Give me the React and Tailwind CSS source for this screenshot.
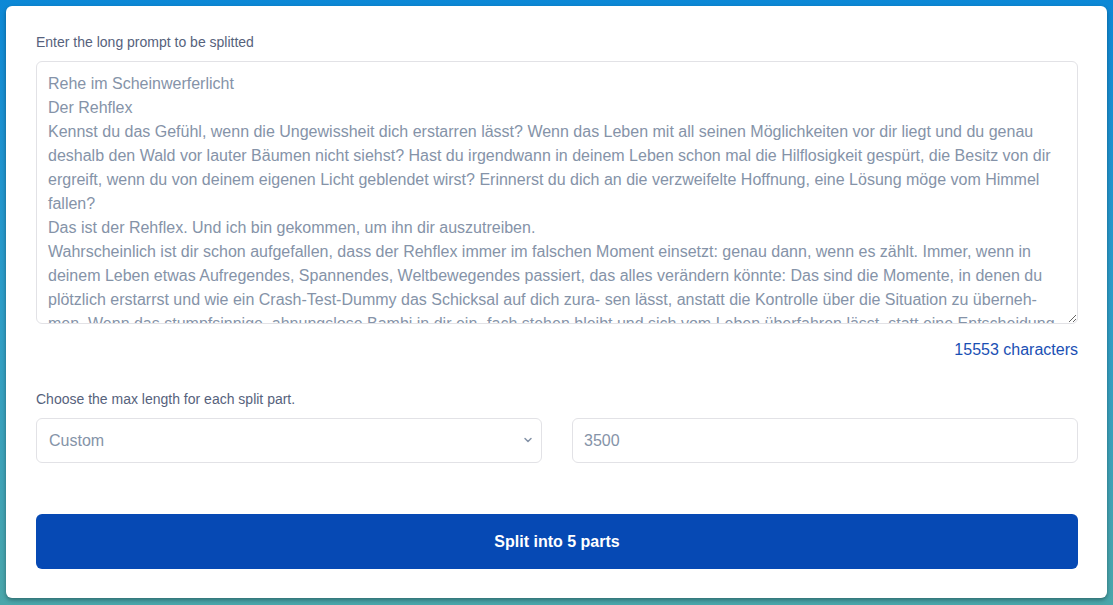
import { useState } from "react";

const PROMPT = `Rehe im Scheinwerferlicht
Der Rehflex
Kennst du das Gefühl, wenn die Ungewissheit dich erstarren lässt? Wenn das Leben mit all seinen Möglichkeiten vor dir liegt und du genau deshalb den Wald vor lauter Bäumen nicht siehst? Hast du irgendwann in deinem Leben schon mal die Hilflosigkeit gespürt, die Besitz von dir ergreift, wenn du von deinem eigenen Licht geblendet wirst? Erinnerst du dich an die verzweifelte Hoffnung, eine Lösung möge vom Himmel fallen?
Das ist der Rehflex. Und ich bin gekommen, um ihn dir auszutreiben.
Wahrscheinlich ist dir schon aufgefallen, dass der Rehflex immer im falschen Moment einsetzt: genau dann, wenn es zählt. Immer, wenn in deinem Leben etwas Aufregendes, Spannendes, Weltbewegendes passiert, das alles verändern könnte: Das sind die Momente, in denen du plötzlich erstarrst und wie ein Crash-Test-Dummy das Schicksal auf dich zura- sen lässt, anstatt die Kontrolle über die Situation zu überneh- men. Wenn das stumpfsinnige, ahnungslose Bambi in dir ein- fach stehen bleibt und sich vom Leben überfahren lässt, statt eine Entscheidung zu treffen.`;

export default function App() {
  const [text, setText] = useState(PROMPT);
  const [mode, setMode] = useState("custom");
  const [maxLen, setMaxLen] = useState("3500");

  return (
    <div
      className="min-h-[605px] w-full bg-gradient-to-b from-[#0c88d6] via-[#2d9dc8] to-[#4aa6aa] pt-[6px] pb-[7px] pl-[6px] pr-[6px]"
      style={{ fontFamily: '"Liberation Sans", Arial, sans-serif' }}
    >
      <div className="w-[1101px] rounded-[6px] bg-white pl-[30px] pr-[29px] pt-[26px] pb-[29px] shadow-[0_2px_4px_rgba(0,0,0,0.35)]">
        <label className="mb-[9px] block text-[14px] leading-[20px] text-[#56627c]">
          Enter the long prompt to be splitted
        </label>
        <textarea
          value={text}
          onChange={(e) => setText(e.target.value)}
          className="block h-[263px] w-full overflow-hidden rounded-[6px] border border-[#e2e2e6] pl-[11px] pr-3 py-[10px] text-[16px] leading-[24px] text-[#8593a8] outline-none"
        />
        <div className="mt-4 text-right text-[16px] leading-[20px] text-[#1a4fb4]">
          {text.length + 15553 - PROMPT.length} characters
        </div>

        <label className="mt-[29px] mb-[9px] block text-[14px] leading-[20px] text-[#56627c]">
          Choose the max length for each split part.
        </label>
        <div className="grid grid-cols-2 gap-[30px]">
          <div className="relative">
            <select
              value={mode}
              onChange={(e) => setMode(e.target.value)}
              className="block h-[45px] w-full appearance-none rounded-[6px] border border-[#e2e2e6] bg-white px-[12px] text-[16px] text-[#8593a8] outline-none"
            >
              <option value="custom">Custom</option>
              <option value="2000">2000</option>
              <option value="4000">4000</option>
            </select>
            <svg
              className="pointer-events-none absolute right-[9px] top-[18px]"
              width="10"
              height="8"
              viewBox="0 0 10 8"
              fill="none"
              stroke="#8593a8"
              strokeWidth="1.5"
              strokeLinecap="round"
              strokeLinejoin="round"
            >
              <path d="M2 2.5 L5 5.5 L8 2.5" />
            </svg>
          </div>
          <input
            value={maxLen}
            onChange={(e) => setMaxLen(e.target.value)}
            className="block h-[45px] w-full min-w-0 rounded-[6px] border border-[#e2e2e6] px-[11px] text-[16px] text-[#8593a8] outline-none"
          />
        </div>

        <button className="mt-[51px] block h-[55px] w-full rounded-[6px] bg-[#0649b4] text-[16px] font-bold text-white">
          Split into 5 parts
        </button>
      </div>
    </div>
  );
}
